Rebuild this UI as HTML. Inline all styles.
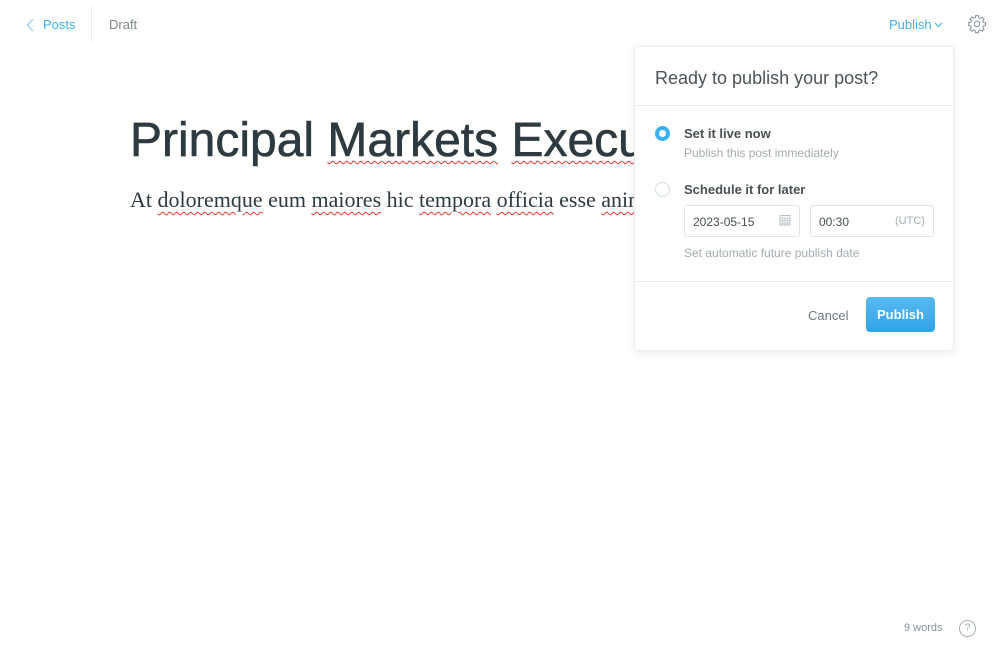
<!DOCTYPE html>
<html><head><meta charset="utf-8"><style>
*{box-sizing:border-box;margin:0;padding:0}
body{width:1000px;height:660px;background:#fff;font-family:"Liberation Sans",sans-serif;position:relative;overflow:hidden;color:#343f44}
.a{position:absolute;white-space:nowrap}
.sq{text-decoration:underline wavy #e33;text-decoration-thickness:1px;text-underline-offset:4px}
</style></head><body>
<svg class="a" style="left:26px;top:18px" width="10" height="14" viewBox="0 0 10 14"><path d="M7 1 L1.5 7 L7 13" fill="none" stroke="#9fd0f3" stroke-width="1.3"/></svg>
<div class="a" style="left:43px;top:17px;font-size:13px;color:#3eb0ef">Posts</div>
<div class="a" style="left:91px;top:6px;width:1px;height:36px;background:#e5eff5"></div>
<div class="a" style="left:109px;top:17px;font-size:13px;color:#7d878a">Draft</div>
<div class="a" style="left:889px;top:17px;font-size:13px;color:#3eb0ef">Publish</div>
<svg class="a" style="left:934px;top:22px" width="9" height="6" viewBox="0 0 9 6"><path d="M1 1 L4.5 4.5 L8 1" fill="none" stroke="#3eb0ef" stroke-width="1"/></svg>
<svg class="a" style="left:967px;top:14px" width="20" height="20" viewBox="0 0 24 24"><path d="M10.3 2h3.4l.5 2.6 1.6.7 2.2-1.5 2.4 2.4-1.5 2.2.7 1.6 2.6.5v3.4l-2.6.5-.7 1.6 1.5 2.2-2.4 2.4-2.2-1.5-1.6.7-.5 2.6h-3.4l-.5-2.6-1.6-.7-2.2 1.5-2.4-2.4 1.5-2.2-.7-1.6L2 13.7v-3.4l2.6-.5.7-1.6-1.5-2.2 2.4-2.4 2.2 1.5 1.6-.7z" fill="none" stroke="#8a969b" stroke-width="1.3"/><circle cx="12" cy="12" r="3.3" fill="none" stroke="#8a969b" stroke-width="1.3"/></svg>

<div class="a" style="left:130px;top:113px;font-size:48px;color:#2e3a40;-webkit-text-stroke:0.6px #2e3a40">Principal <span class="sq">Markets</span> <span class="sq">Execu</span></div>
<div class="a" style="left:130px;top:187px;font-family:'Liberation Serif',serif;font-size:22px;color:#2e3a40">At <span class="sq">doloremque</span> eum <span class="sq">maiores</span> hic <span class="sq">tempora</span> <span class="sq">officia</span> esse <span class="sq">anim</span></div>

<div class="a" style="left:634px;top:46px;width:320px;height:305px;background:#fff;border:1px solid #e8eef2;border-radius:4px;box-shadow:0 2px 10px rgba(0,0,0,.08)">
<div class="a" style="left:20px;top:21px;font-size:18px;color:#4a5357">Ready to publish your post?</div>
<div class="a" style="left:0;top:58px;width:318px;height:1px;background:#e3edf3"></div>
<div class="a" style="left:20px;top:79px;width:15px;height:15px;border-radius:50%;border:4px solid #3eb0ef;background:#fff"></div>
<div class="a" style="left:49px;top:79px;font-size:13px;font-weight:bold;color:#474f53">Set it live now</div>
<div class="a" style="left:49px;top:99px;font-size:12px;color:#a3acb0">Publish this post immediately</div>
<div class="a" style="left:20px;top:135px;width:15px;height:15px;border-radius:50%;border:1px solid #cfdde6"></div>
<div class="a" style="left:49px;top:135px;font-size:13px;font-weight:bold;color:#474f53">Schedule it for later</div>
<div class="a" style="left:49px;top:158px;width:116px;height:32px;border:1px solid #dfe6ea;border-radius:3px"></div>
<div class="a" style="left:58px;top:168px;font-size:12px;color:#474f53">2023-05-15</div>
<svg class="a" style="left:144px;top:167px" width="12" height="12" viewBox="0 0 12 12"><rect x="1" y="1.5" width="10" height="9.5" fill="none" stroke="#b8c1c5"/><path d="M1 4h10M1 6.5h10M1 9h10M3.5 4v7M6 4v7M8.5 4v7" stroke="#b8c1c5" stroke-width=".8"/></svg>
<div class="a" style="left:175px;top:158px;width:124px;height:32px;border:1px solid #dfe6ea;border-radius:3px"></div>
<div class="a" style="left:184px;top:168px;font-size:12px;color:#474f53">00:30</div>
<div class="a" style="left:260px;top:168px;font-size:11px;color:#a3acb0">(UTC)</div>
<div class="a" style="left:49px;top:199px;font-size:12px;color:#a3acb0">Set automatic future publish date</div>
<div class="a" style="left:0;top:234px;width:318px;height:1px;background:#e3edf3"></div>
<div class="a" style="left:173px;top:261px;font-size:13px;color:#6f797d">Cancel</div>
<div class="a" style="left:231px;top:250px;width:69px;height:35px;border-radius:4px;background:linear-gradient(#5ab9f1,#2fa4e7);color:#fff;font-size:13px;font-weight:bold;text-align:center;line-height:35px">Publish</div>
</div>

<div class="a" style="left:904px;top:622px;font-size:11px;color:#8a969b">9 words</div>
<div class="a" style="left:959px;top:620px;width:17px;height:17px;border-radius:50%;border:1px solid #a7b2b7;font-size:11px;color:#a7b2b7;text-align:center;line-height:15px">?</div>
</body></html>
